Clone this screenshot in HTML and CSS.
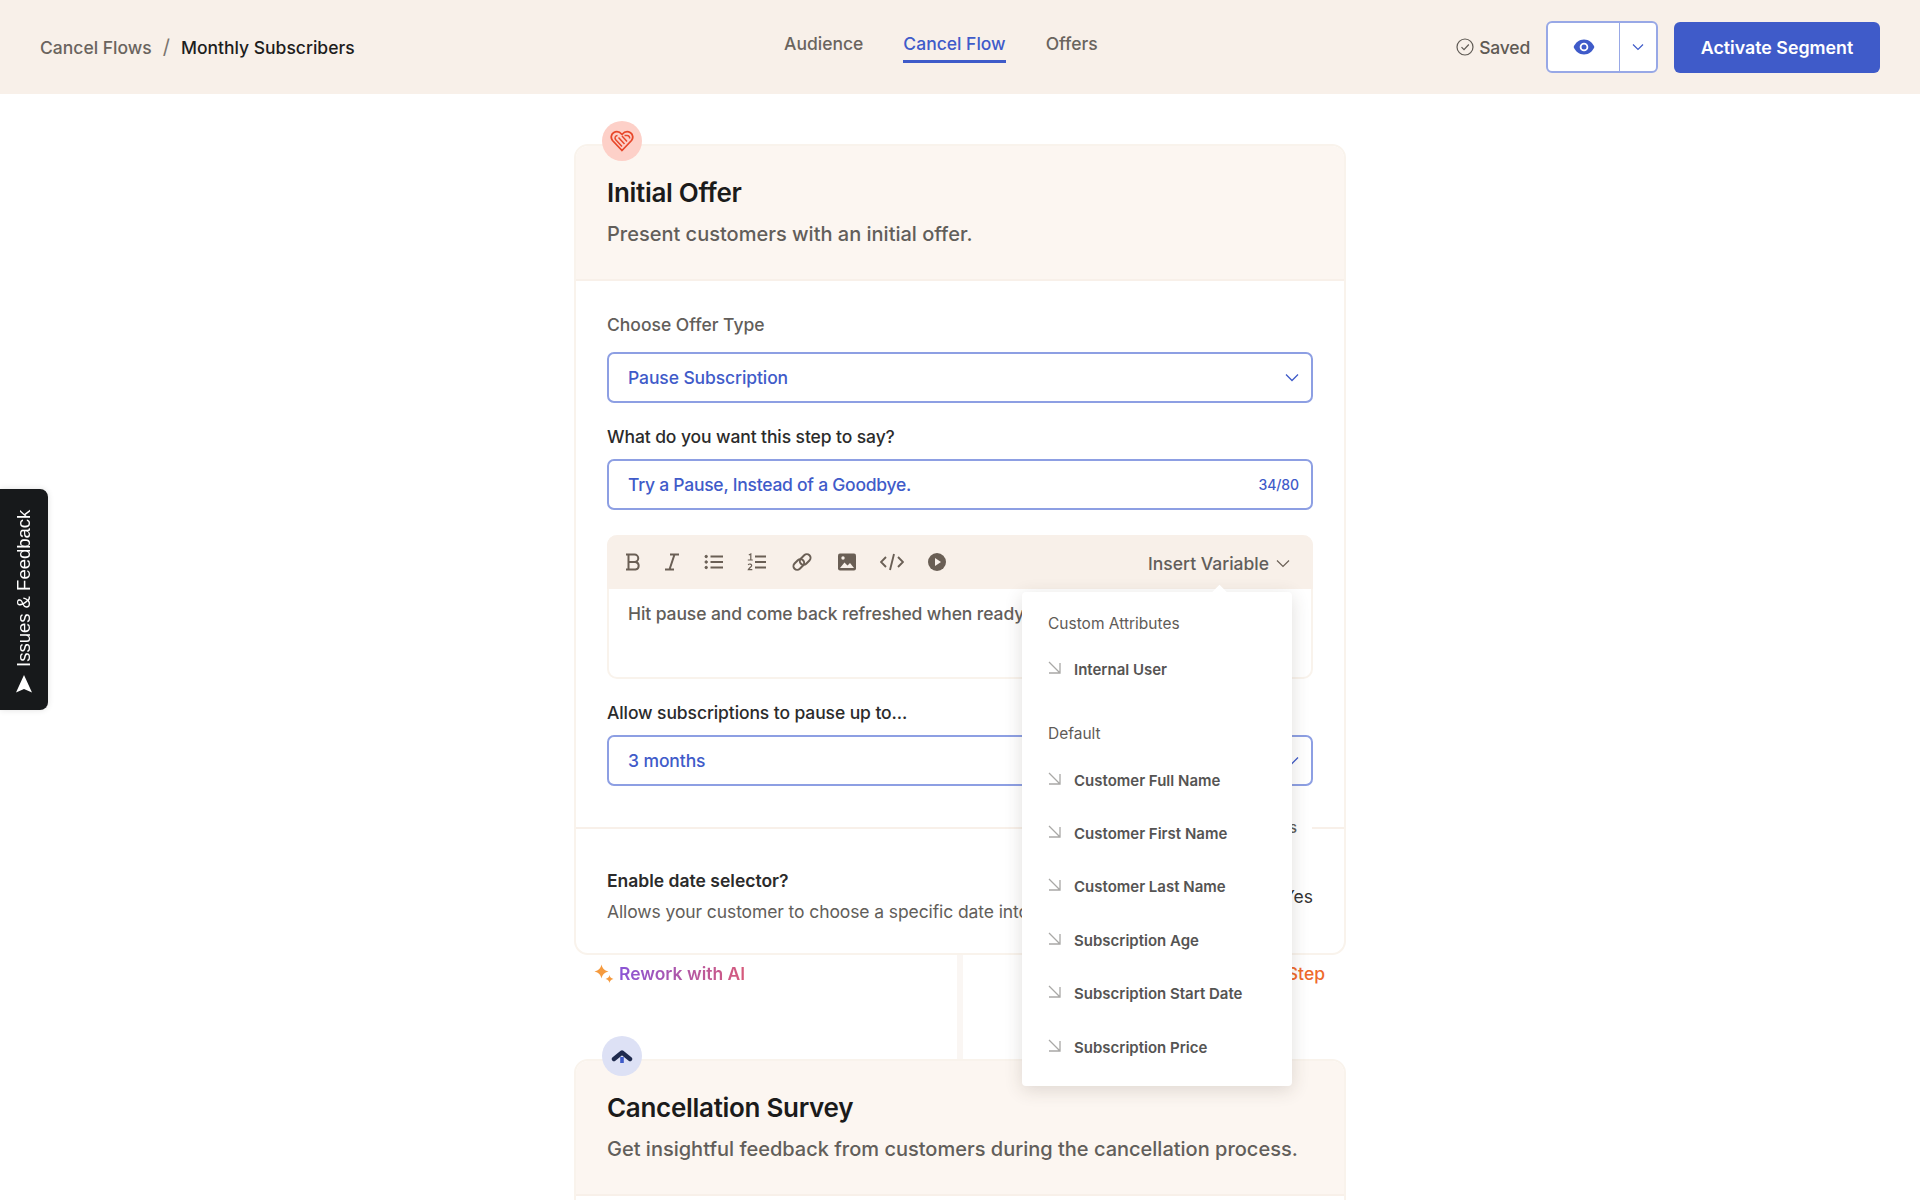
FILE: index.html
```html
<!DOCTYPE html>
<html lang="en">
<head>
  <meta charset="UTF-8" />
  <meta name="viewport" content="width=device-width, initial-scale=1" />
  <title>Cancel Flow</title>
  <link rel="stylesheet" href="styles.css">
</head>
<body>
  <header class="topbar">
    <nav class="breadcrumb">
      <a class="crumb">Cancel Flows</a>
      <span class="crumb-sep">/</span>
      <a class="crumb crumb-current">Monthly Subscribers</a>
    </nav>

    <nav class="tabs">
      <a class="tab">Audience</a>
      <a class="tab tab-active">Cancel Flow</a>
      <a class="tab">Offers</a>
    </nav>

    <div class="actions">
      <span class="saved">
        <svg width="18" height="18" viewBox="0 0 18 18" fill="none" stroke="#5f5a54" stroke-width="1.2"><circle cx="9" cy="9" r="8"/><path d="M5.5 9.2l2.5 2.5 4.8-5.2"/></svg>
        Saved
      </span>
      <div class="preview">
        <button class="preview-eye">
          <svg width="22" height="16" viewBox="0 0 22 16"><path d="M11 0.5C6 0.5 2.2 4 0.6 8c1.6 4 5.4 7.500 10.400 7.500S19.800 12 21.400 8C19.800 4 16 0.500 11 0.500z" fill="#3f5bc9"/><circle cx="11" cy="8" r="4.300" fill="#fff"/><circle cx="11" cy="8" r="2.500" fill="#3f5bc9"/></svg>
        </button>
        <button class="preview-more">
          <svg width="12" height="8" viewBox="0 0 12 8" fill="none" stroke="#3f5bc9" stroke-width="1.2"><path d="M1 1.500l5 5 5-5"/></svg>
        </button>
      </div>
      <button class="activate">Activate Segment</button>
    </div>
  </header>

  <a class="feedback">
    <svg width="18" height="18" viewBox="0 0 18 18"><path d="M1 0.500L9 4l8-3.500L9 18z" fill="#fff"/></svg>
    Issues &amp; Feedback
  </a>

  <main class="flow">
    <section class="card">
      <span class="badge badge-red">
        <svg width="24" height="22" viewBox="0 0 24 22" fill="none" stroke="#e8472a" stroke-width="1.800" stroke-linejoin="round"><path d="M12 20.500L2.500 10.500C0.500 8 1 4.500 3.500 2.800 6 1.200 9.500 1.600 12 4.500c2.500-2.900 6-3.300 8.500-1.700 2.500 1.700 3 5.200 1 7.700z"/><path d="M12 16.500L5.500 9.500C4.300 7.500 5.500 5.500 7.500 5.500M14.500 14L8.500 7.500M17 11.500l-5-5.500M19.500 8.500c.5-1.500-.5-3-2.500-3h-2.500" stroke-width="1.500"/></svg>
      </span>
      <div class="card-head">
        <h2>Initial Offer</h2>
        <p>Present customers with an initial offer.</p>
      </div>

      <div class="card-body">
        <label class="label label-first">Choose Offer Type</label>
        <div class="control">
          <span>Pause Subscription</span>
          <svg width="14" height="9" viewBox="0 0 14 9" fill="none" stroke="#3f5bc9" stroke-width="1.300"><path d="M1 1.500l6 6 6-6"/></svg>
        </div>

        <label class="label label-dark">What do you want this step to say?</label>
        <div class="control">
          <span class="control-tight">Try a Pause, Instead of a Goodbye.</span>
          <span class="count">34/80</span>
        </div>

        <div class="editor">
          <div class="toolbar">
            <svg class="tool tool-bold" viewBox="0 0 20 20" fill="none" stroke="#6a5f55" stroke-width="2"><path d="M3 2.500h8.500a3.700 3.700 0 010 7.500H5.500M5.500 10h7a3.800 3.800 0 010 7.500H3M5.500 2.500v15"/></svg>
            <svg class="tool tool-italic" viewBox="0 0 20 20" fill="none" stroke="#6a5f55" stroke-width="2"><path d="M8 2.500h9M3 17.500h9M12.500 2.500L7.500 17.500"/></svg>
            <svg class="tool tool-list" viewBox="0 0 20 20" fill="#6a5f55" stroke="#6a5f55"><path d="M6.500 4.500H19M6.500 10H19M6.500 15.500H19" stroke-width="2"/><circle cx="2.200" cy="4.500" r="1.200"/><circle cx="2.200" cy="10" r="1.200"/><circle cx="2.200" cy="15.500" r="1.200"/></svg>
            <svg class="tool" viewBox="0 0 20 20" fill="none" stroke="#6a5f55"><path d="M8 4.500h11M8 10h11M8 15.500h11" stroke-width="2"/><path d="M1.800 3l2-1v6M.8 8h5M1.200 13c.8-1.600 3.800-1.200 3.400.8-.3 1-2.500 2-3.300 3.900h4" stroke-width="1.200"/></svg>
            <svg class="tool" viewBox="0 0 20 20" fill="none" stroke="#6a5f55" stroke-width="2"><rect x="0.800" y="8.800" width="12" height="7.400" rx="3.700" transform="rotate(-45 6.800 12.500)"/><rect x="7.200" y="3.800" width="12" height="7.400" rx="3.700" transform="rotate(-45 13.200 7.500)"/></svg>
            <svg class="tool" viewBox="0 0 20 20"><rect x="1" y="1.500" width="18" height="17" rx="2" fill="#6a5f55"/><path d="M3 16l4.500-5.500 3 3 2.500-2.500 4 5z" fill="#f8f0e9"/><circle cx="6" cy="6" r="1.700" fill="#f8f0e9"/></svg>
            <svg class="tool tool-code" viewBox="0 0 24 20" fill="none" stroke="#6a5f55" stroke-width="1.900"><path d="M6 5l-5 5 5 5M18 5l5 5-5 5M14 2l-4 16"/></svg>
            <svg class="tool" viewBox="0 0 20 20"><circle cx="10" cy="10" r="9" fill="#6a5f55"/><path d="M8 6l6 4-6 4z" fill="#f8f0e9"/></svg>
            <span class="insert">
              Insert Variable
              <svg width="14" height="9" viewBox="0 0 14 9" fill="none" stroke="#6a5f55" stroke-width="1.200"><path d="M1 1.500l6 6 6-6"/></svg>
            </span>
          </div>
          <div class="editor-text">Hit pause and come back refreshed when ready.</div>

          <div class="menu">
            <h4>Custom Attributes</h4>
            <a class="menu-item"><svg class="corner" viewBox="0 0 14 14"><path d="M1 1l11 11M12 2v10H1"/></svg>Internal User</a>
            <h4 class="menu-group">Default</h4>
            <a class="menu-item"><svg class="corner" viewBox="0 0 14 14"><path d="M1 1l11 11M12 2v10H1"/></svg>Customer Full Name</a>
            <a class="menu-item"><svg class="corner" viewBox="0 0 14 14"><path d="M1 1l11 11M12 2v10H1"/></svg>Customer First Name</a>
            <a class="menu-item"><svg class="corner" viewBox="0 0 14 14"><path d="M1 1l11 11M12 2v10H1"/></svg>Customer Last Name</a>
            <a class="menu-item"><svg class="corner" viewBox="0 0 14 14"><path d="M1 1l11 11M12 2v10H1"/></svg>Subscription Age</a>
            <a class="menu-item"><svg class="corner" viewBox="0 0 14 14"><path d="M1 1l11 11M12 2v10H1"/></svg>Subscription Start Date</a>
            <a class="menu-item"><svg class="corner" viewBox="0 0 14 14"><path d="M1 1l11 11M12 2v10H1"/></svg>Subscription Price</a>
          </div>
        </div>

        <label class="label label-dark label-allow">Allow subscriptions to pause up to...</label>
        <div class="control">
          <span>3 months</span>
          <svg width="14" height="9" viewBox="0 0 14 9" fill="none" stroke="#3f5bc9" stroke-width="1.300"><path d="M1 1.500l6 6 6-6"/></svg>
        </div>
      </div>

      <div class="divider"><span>Additional Options</span></div>

      <div class="option">
        <div>
          <strong>Enable date selector?</strong>
          <p>Allows your customer to choose a specific date into the future.</p>
        </div>
        <span class="option-value">Yes</span>
      </div>
    </section>

    <div class="step-gap">
      <a class="rework">
        <svg width="20" height="20" viewBox="0 0 20 20" fill="#f59a3e"><path d="M7.500 0.500c.8 3.700 2.700 5.800 7 7-4.300 1.200-6.200 3.300-7 7-.8-3.700-2.700-5.800-7-7 4.300-1.200 6.200-3.300 7-7z"/><path d="M15.500 11c.4 2.100 1.400 3.300 4 4-2.600.7-3.600 1.900-4 4-.4-2.100-1.400-3.300-4-4 2.600-.7 3.600-1.900 4-4z"/></svg>
        <span>Rework with AI</span>
      </a>
      <a class="delete-step">Delete Step</a>
    </div>

    <section class="card">
      <span class="badge badge-blue">
        <svg width="22" height="14" viewBox="0 0 22 14" fill="none"><path d="M3 10L11 3.500 19 10" stroke="#1f2a4d" stroke-width="4.400" stroke-linecap="round" stroke-linejoin="round"/><path d="M11 8v6" stroke="#3f5bc9" stroke-width="3.600"/></svg>
      </span>
      <div class="card-head">
        <h2>Cancellation Survey</h2>
        <p>Get insightful feedback from customers during the cancellation process.</p>
      </div>
      <div class="card-body"></div>
    </section>
  </main>
</body>
</html>
```

FILE: styles.css
```css
* {
  box-sizing: border-box;
}

html, body {
  height: 1200px;
  overflow: hidden;
}

body {
  margin: 0;
  background-color: #fff;
  font-family: Inter, 'Open Sans', sans-serif;
  color: #5f5b57;
}

p, h2, h4 {
  margin: 0;
}

button {
  font-family: inherit;
  cursor: pointer;
}

/* top bar */
.topbar {
  height: 94px;
  padding: 0 40px;
  background-color: #f8f0e9;
  display: grid;
  grid-template-columns: 744px auto 1fr;
  align-items: center;
}

.breadcrumb {
  display: flex;
  align-items: center;
  font-size: 17.500px;
  font-weight: 500;
  letter-spacing: 0;
}

.crumb {
  color: #6a645e;
}

.crumb-sep {
  margin: 0 11px;
  font-size: 20px;
  font-weight: 400;
  color: #7a746e;
}

.crumb-current {
  color: #1d1d1d;
}

.tabs {
  display: flex;
  gap: 40px;
  margin-top: 2px;
}

.tab {
  padding: 0 0 6px;
  font-size: 17.500px;
  font-weight: 500;
  letter-spacing: 0;
  color: #6a645e;
  border-bottom: 3px solid transparent;
}

.tab-active {
  color: #3f5bc9;
  border-bottom-color: #3f5bc9;
}

.actions {
  display: flex;
  justify-content: flex-end;
  align-items: center;
}

.saved {
  display: flex;
  align-items: center;
  gap: 5px;
  margin-right: 16px;
  font-size: 17.500px;
  font-weight: 500;
  letter-spacing: -0.2px;
  color: #5f5a54;
}

.preview {
  display: flex;
  width: 112px;
  height: 52px;
  margin-right: 16px;
  background-color: #fff;
  border: 2px solid #98a8e6;
  border-radius: 6px;
  overflow: hidden;
}

.preview button {
  border: none;
  background: none;
  padding: 0;
  display: flex;
  align-items: center;
  justify-content: center;
}

.preview-eye {
  width: 72px;
  border-right: 1px solid #98a8e6 !important;
}

.preview-more {
  flex: 1;
}

.activate {
  width: 206px;
  height: 51px;
  border: none;
  border-radius: 6px;
  background-color: #3f5bc9;
  color: #fff;
  font-size: 17.800px;
  font-weight: 600;
}

/* side tab */
.feedback {
  position: fixed;
  left: 0;
  top: 489px;
  width: 48px;
  height: 221px;
  display: flex;
  align-items: center;
  gap: 8px;
  padding-top: 17px;
  writing-mode: vertical-rl;
  transform: rotate(180deg);
  background-color: #17191b;
  color: #fff;
  border-radius: 8px 0 0 8px;
  font-family: 'Liberation Sans', sans-serif;
  font-size: 18.500px;
  box-shadow: 0 0 6px rgba(0,0,0,0.12);
}

/* flow of steps */
.flow {
  width: 772px;
  margin: 0 auto;
  padding-top: 50px;
}

.card {
  position: relative;
  background-color: #fff;
  border: 2px solid #f9f3ec;
  border-radius: 14px;
}

.badge {
  position: absolute;
  left: 26px;
  top: -25px;
  width: 40px;
  height: 40px;
  border-radius: 50%;
  display: flex;
  align-items: center;
  justify-content: center;
}

.badge-red {
  background-color: #fdd0c8;
}

.badge-blue {
  background-color: #dde1f5;
}

.card-head {
  padding: 31px 31px 31px;
  background-color: #fcf6f1;
  border-bottom: 2px solid #f8f0e9;
  border-radius: 12px 12px 0 0;
}

.card-head h2 {
  font-size: 26px;
  line-height: 32px;
  font-weight: 600;
  letter-spacing: -0.3px;
  color: #1b1b1b;
}

.card-head p {
  margin-top: 11px;
  font-size: 20px;
  line-height: 28px;
  font-weight: 500;
  letter-spacing: 0;
  color: #625e5a;
}

.card-body {
  padding: 32px 31px 41px;
}

.label {
  display: block;
  font-size: 17.500px;
  line-height: 24px;
  font-weight: 500;
  letter-spacing: 0;
  color: #625e5a;
}

.label-first {
  margin-bottom: 15px;
}

.label-dark {
  margin: 22px 0 10px;
  letter-spacing: -0.1px;
  color: #2b2b2b;
}

.label-allow {
  margin-top: 22px;
}

.control {
  height: 51px;
  padding: 0 19px;
  display: flex;
  align-items: center;
  justify-content: space-between;
  border: 2px solid #8d9fe3;
  border-radius: 7px;
  background-color: #fff;
  font-size: 17.500px;
  font-weight: 500;
  letter-spacing: -0.1px;
  color: #3f5bc9;
}

.control svg {
  margin-right: -7px;
}

.control-tight {
  letter-spacing: -0.25px;
}

.control .count {
  margin-right: -7px;
  font-size: 14px;
}

/* rich text box */
.editor {
  position: relative;
  height: 144px;
  margin-top: 25px;
  border: 2px solid #f9f3ec;
  border-top: none;
  border-radius: 10px;
}

.toolbar {
  height: 54px;
  margin: 0 -2px;
  padding: 0 23px 0 16px;
  display: flex;
  align-items: center;
  gap: 25px;
  background-color: #f8f0e9;
  border-radius: 10px 10px 0 0;
}

.tool {
  width: 20px;
  height: 20px;
  flex: none;
}

.tool-bold {
  margin-right: -6px;
}

.tool-italic {
  margin-right: -3px;
}

.tool-list {
  margin-right: -2px;
}

.tool-code {
  width: 24px;
  margin: 0 -2px;
}

.insert {
  margin-left: auto;
  padding-top: 2px;
  display: flex;
  align-items: center;
  gap: 7px;
  font-size: 17.500px;
  font-weight: 500;
  letter-spacing: 0;
  color: #625e5a;
}

.editor-text {
  padding: 13px 19px;
  font-size: 17.500px;
  line-height: 24px;
  font-weight: 500;
  letter-spacing: -0.1px;
  color: #625e5a;
}

.menu {
  position: absolute;
  left: 413px;
  top: 57px;
  z-index: 5;
  width: 270px;
  height: 494px;
  padding: 21px 26px 0;
  background-color: #fff;
  border-radius: 4px;
  box-shadow: 0 4px 18px rgba(60,50,40,0.16);
}

.menu::before {
  content: '';
  position: absolute;
  right: 67px;
  top: -5px;
  width: 11px;
  height: 11px;
  background-color: #fff;
  transform: rotate(45deg);
}

.menu h4 {
  margin-bottom: 8px;
  font-size: 15.500px;
  line-height: 22px;
  font-weight: 400;
  color: #5f5b57;
}

.menu h4.menu-group {
  margin-top: 27px;
}

.menu-item {
  height: 53.400px;
  display: flex;
  align-items: center;
  gap: 12px;
  font-size: 15px;
  font-weight: 600;
  color: #555453;
}

.corner {
  width: 14px;
  height: 14px;
  margin-top: -3px;
  fill: none;
  stroke: #a9a8a6;
  stroke-width: 1.300;
}

/* option under the divider */
.divider {
  height: 2px;
  padding-right: 32px;
  display: flex;
  justify-content: flex-end;
  align-items: center;
  background-color: #f8f0e9;
}

.divider span {
  padding: 0 15px;
  background-color: #fff;
  font-size: 15px;
  line-height: 18px;
  font-weight: 500;
  color: #5f5b57;
}

.option {
  padding: 40px 31px 29px;
  display: flex;
  align-items: center;
  justify-content: space-between;
}

.option strong {
  display: block;
  font-size: 17.500px;
  line-height: 24px;
  font-weight: 600;
  letter-spacing: 0;
  color: #2b2b2b;
}

.option p {
  margin-top: 7px;
  font-size: 17.500px;
  line-height: 24px;
  letter-spacing: -0.1px;
  white-space: nowrap;
  color: #625e5a;
}

.option-value {
  font-size: 17.500px;
  color: #333;
}

/* space between two steps */
.step-gap {
  height: 104px;
  padding: 7px 21px 0 20px;
  display: flex;
  align-items: flex-start;
  justify-content: space-between;
  background: linear-gradient(#faf6f3, #faf6f3) center / 6px 100% no-repeat;
}

.rework {
  display: flex;
  align-items: center;
  gap: 5px;
  font-size: 17.500px;
  line-height: 24px;
  font-weight: 600;
  letter-spacing: 0;
}

.rework span {
  background: linear-gradient(to right, #8a54d6, #d65a7a);
  -webkit-background-clip: text;
  background-clip: text;
  color: transparent;
}

.delete-step {
  font-size: 17.500px;
  line-height: 24px;
  font-weight: 500;
  color: #ef6a2c;
}
```
